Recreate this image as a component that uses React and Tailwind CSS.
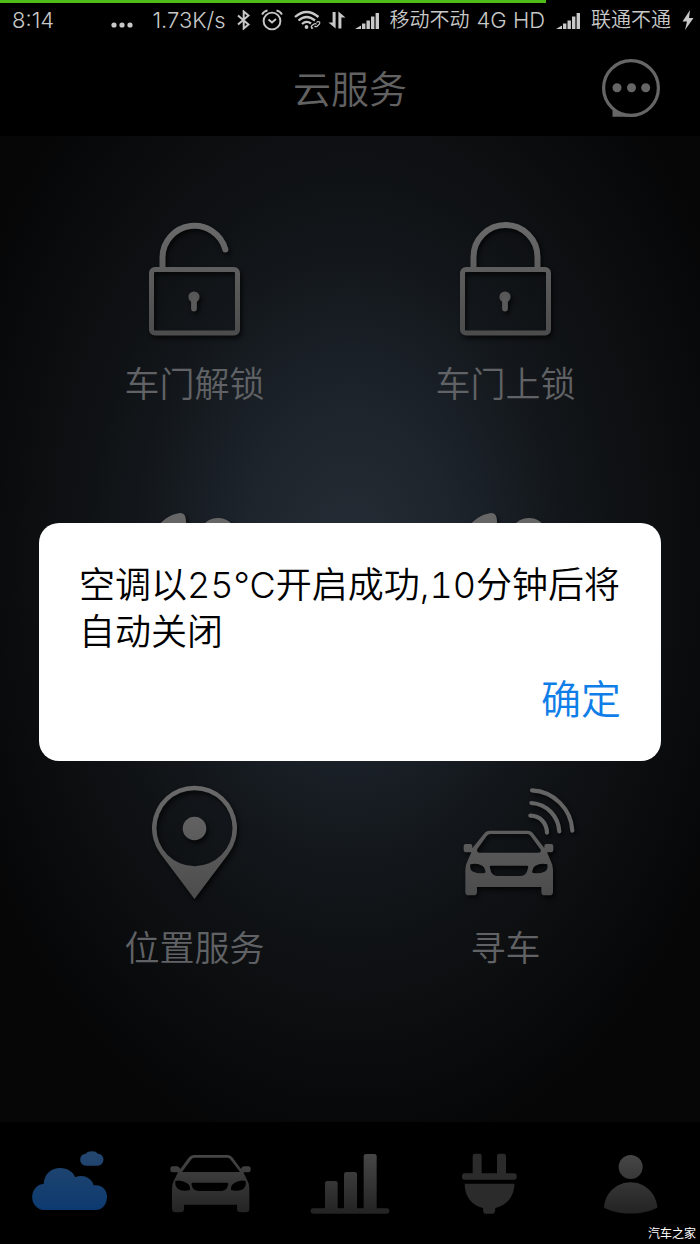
import React from "react";

const metal = "url(#metal)";

// Shared gradients for every icon on the page
function Gradients() {
    return (
        <svg width="0" height="0" className="absolute" aria-hidden="true">
            <defs>
                <linearGradient id="metal" x1="0" y1="0" x2="0" y2="120" gradientUnits="userSpaceOnUse">
                    <stop offset="0" stopColor="#6b6b6c" />
                    <stop offset="1" stopColor="#4b4b4c" />
                </linearGradient>
                <linearGradient id="metalLarge" x1="0" y1="40" x2="0" y2="380" gradientUnits="userSpaceOnUse">
                    <stop offset="0" stopColor="#6b6b6c" />
                    <stop offset="1" stopColor="#4b4b4c" />
                </linearGradient>
                <linearGradient id="tab" x1="0" y1="100" x2="0" y2="280" gradientUnits="userSpaceOnUse">
                    <stop offset="0" stopColor="#474747" />
                    <stop offset="1" stopColor="#232323" />
                </linearGradient>
                <linearGradient id="cloud" x1="0" y1="95" x2="0" y2="270" gradientUnits="userSpaceOnUse">
                    <stop offset="0" stopColor="#25476f" />
                    <stop offset="1" stopColor="#0c3a70" />
                </linearGradient>
            </defs>
        </svg>
    );
}

function ServiceIcon({ children }) {
    return (
        <svg
            viewBox="0 0 120 120"
            className="size-[120px] overflow-visible drop-shadow-[2px_3px_2px_rgba(0,0,0,0.7)]"
            fill="none"
            aria-hidden="true"
        >
            {children}
        </svg>
    );
}

function LockBody() {
    return (
        <>
            <rect x="16.5" y="51.5" width="86" height="63.5" rx="3.5" stroke={metal} strokeWidth="5" />
            <circle cx="59" cy="79" r="5.6" fill={metal} />
            <path d="M59 80v10.5" stroke="#5a5a5b" strokeWidth="5.8" strokeLinecap="round" />
        </>
    );
}

function UnlockIcon() {
    return (
        <ServiceIcon>
            <path d="M27.5 50V39A32 32 0 0 1 90.3 31.2" stroke={metal} strokeWidth="6" />
            <circle cx="90.4" cy="31.4" r="3" fill="#646465" />
            <LockBody />
        </ServiceIcon>
    );
}

function LockIcon() {
    return (
        <ServiceIcon>
            <path d="M27.5 50V39a32 32 0 0 1 64 0V50" stroke={metal} strokeWidth="6" />
            <LockBody />
        </ServiceIcon>
    );
}

function FanIcon() {
    return (
        <ServiceIcon>
            <path
                d="M58 56C42 54 28 46 20 32C24 21 36 14 45 13C50 13 51 17 51 22C54 34 62 44 58 56Z"
                fill={metal}
            />
            <path
                d="M62 58L64 36A19 19 0 0 1 102 38C90 44 72 48 62 58Z"
                fill={metal}
            />
            <path d="M60 64C72 66 98 74 98 92C90 106 74 108 68 106C70 90 66 76 60 64Z" fill={metal} />
            <path d="M56 62C56 78 54 102 36 102C20 100 14 88 16 78C30 76 46 72 56 62Z" fill={metal} />
            <circle cx="59" cy="60" r="7" fill={metal} />
        </ServiceIcon>
    );
}

function PinIcon() {
    return (
        <ServiceIcon>
            <path
                fillRule="evenodd"
                d="M59.5 117L25.5 71.7A42.500 42.500 0 1 1 93.5 71.7ZM59.5 8.200a38 38 0 1 0 0 76a38 38 0 1 0 0-76Z"
                fill={metal}
            />
            <circle cx="59.5" cy="46.5" r="11.8" fill={metal} />
        </ServiceIcon>
    );
}

function FindCarIcon() {
    return (
        <ServiceIcon>
            <g transform="translate(-16 -12) scale(.33333)">
                <path
                    fillRule="evenodd"
                    fill="url(#metalLarge)"
                    d="M180 182H293Q304 182 310 191L343 234V228Q343 222 349 222H363Q370 222 370 229V240Q370 247 363 247H351L362 272Q369 284 369 300V366Q369 376 359 376H344Q334 376 334 366V351H141V366Q141 376 131 376H116Q106 376 106 366V300Q106 284 113 272L124 247H108Q101 247 101 240V229Q101 222 108 222H121Q127 222 127 228V235L162 191Q168 182 180 182ZM181 192Q175 192 170 198L142 237Q139 248 150 248H324Q335 248 332 239L302 198Q298 192 292 192ZM121 283Q118 300 130 305Q146 313 166 308Q168 296 158 288Q140 277 121 283ZM352 283Q355 300 343 305Q327 313 307 308Q305 296 315 288Q333 277 352 283ZM184 287Q177 287 180 294Q184 318 202 318H272Q290 318 294 294Q297 287 290 287Z"
                />
                <g stroke="#646465" strokeWidth="12.5" strokeLinecap="round">
                    <path d="M306 61C372 64 424 118 427 182" />
                    <path d="M304 99C352 102 385 140 388 184" />
                    <path d="M301 137C332 138 350 160 351 188" />
                </g>
            </g>
        </ServiceIcon>
    );
}

function TabIcon({ viewBox, children }) {
    return (
        <svg viewBox={viewBox} className="h-[70px] w-[84px]" fill="url(#tab)" aria-hidden="true">
            {children}
        </svg>
    );
}

function CloudTab() {
    return (
        <TabIcon viewBox="84 84 252 210">
            <g fill="url(#cloud)">
                <path d="M132 270A35 39 0 0 1 131 192C133 160 155 144 181 144C203 144 219 156 226 172C246 162 275 172 281 196C306 192 321 210 321 230C321 254 306 270 286 270Z" />
                <path d="M257 137A17 18 0 0 1 258 101Q263 94 276 94Q288 94 294 101A17 18 0 0 1 293 137Z" />
            </g>
        </TabIcon>
    );
}

function CarTab() {
    return (
        <TabIcon viewBox="504 84 252 210">
            <path
                fillRule="evenodd"
                d="M582 105H683Q692 105 698 113L723 147Q725 139 732 139H745Q752 139 752 145V151Q752 157 745 157H730L741 179Q748 190 748 205V267Q748 277 738 277H722Q711 277 711 267V254H552V267Q552 277 541 277H526Q516 277 516 267V205Q516 190 523 179L534 157H518Q511 157 511 151V145Q511 139 518 139H531Q538 139 541 147L566 113Q572 105 582 105ZM583 113Q577 113 573 119L546 156H720L692 119Q688 113 682 113ZM526 183Q524 203 538 209Q553 215 570 210Q572 196 560 189Q543 178 526 183ZM737 183Q740 203 726 209Q710 215 693 210Q691 196 703 189Q720 178 737 183ZM578 188Q573 188 575 196Q579 213 596 213H664Q680 213 684 196Q687 188 681 188Z"
            />
        </TabIcon>
    );
}

function StatsTab() {
    return (
        <TabIcon viewBox="924 84 252 210">
            <rect x="932" y="265" width="236" height="16" rx="7" />
            <path d="M975 268V190Q975 183 982 183H1006Q1013 183 1013 190V268Z" />
            <path d="M1032 268V163Q1032 156 1039 156H1064Q1071 156 1071 163V268Z" />
            <path d="M1091 268V109Q1091 102 1098 102H1123Q1130 102 1130 109V268Z" />
        </TabIcon>
    );
}

function PlugTab() {
    return (
        <TabIcon viewBox="294 84 252 210">
            <g fill="#2b2b2b">
                <path d="M368 162V108Q368 101 375 101H388Q395 101 395 108V162Z" />
                <path d="M441 162V108Q441 101 448 101H461Q468 101 468 108V162Z" />
                <rect x="336" y="160" width="164" height="19" rx="8" />
                <path d="M344 191H493C493 230 470 256 436 264Q436 281 428 281H405Q399 281 399 264C366 256 344 230 344 191Z" />
            </g>
        </TabIcon>
    );
}

function PersonTab() {
    return (
        <TabIcon viewBox="714 84 252 210">
            <circle cx="842" cy="141" r="36" />
            <path d="M762 263C764 220 800 187 842 187C884 187 919 220 922 263C880 286 804 286 762 263Z" />
        </TabIcon>
    );
}

function Signal() {
    return (
        <svg viewBox="0 0 24 17" className="h-[17px] w-6" fill="currentColor" aria-hidden="true">
            <path d="M0 17L6 13.500V17ZM7 11.500h3.400V17H7ZM11.500 8.500h3.400V17h-3.400ZM16 4.500h3.400V17h-3.400ZM20.600 1H24v16h-3.400Z" />
        </svg>
    );
}

function StatusBar() {
    return (
        <div className="relative flex h-10 items-center justify-between bg-black pl-3 pr-[6px] text-[22px] leading-6 text-[#c8c8c8]">
            {/* Download progress */}
            <div className="absolute left-0 top-0 h-[3px] w-[78%] bg-[#4dbb18]" />
            <span>8:14</span>
            <div className="flex items-center gap-[11px] whitespace-nowrap">
                <svg viewBox="0 0 22 20" className="mr-2 h-5 w-[22px]" fill="currentColor" aria-hidden="true">
                    <circle cx="3" cy="15" r="2.6" />
                    <circle cx="11" cy="15" r="2.6" />
                    <circle cx="19" cy="15" r="2.6" />
                </svg>
                <span>1.73K/s</span>
                <svg viewBox="0 0 13 20" className="h-5 w-[13px]" fill="none" stroke="currentColor" strokeWidth="2" aria-hidden="true">
                    <path d="M1 5.500L11.500 14.500L6.700 18.500V1.500L11.500 5.500L1 14.500" />
                </svg>
                <svg viewBox="0 0 22 22" className="size-[22px]" fill="none" stroke="currentColor" strokeWidth="1.9" aria-hidden="true">
                    <circle cx="11" cy="12" r="8.4" />
                    <path d="M7.500 10.500L11 13.500L15 10M1 5.500Q3 2 6.500 1.500M21 5.500Q19 2 15.500 1.500" />
                </svg>
                <svg viewBox="0 0 27 20" className="h-5 w-[27px]" fill="none" stroke="currentColor" strokeWidth="2.3" aria-hidden="true">
                    <path d="M1 7Q12.500-3 24.500 7M4.500 10.500Q12.500 3.500 21 10.500M8 14Q12.500 10 17 13.500" />
                    <circle cx="12.500" cy="17" r="1.9" fill="currentColor" stroke="none" />
                    <path d="M19 17.500L18 18.500Q16.500 17 18 15.500L20 14Q21.500 13 22.500 14.500M22.500 12.500L24 11.500Q26.500 11.500 25.500 14L23 16.500Q21.500 17 20.500 16" strokeWidth="1.2" />
                </svg>
                <svg viewBox="0 0 18 18" className="-ml-1 -mr-[2px] size-[18px]" fill="currentColor" aria-hidden="true">
                    <path d="M4.600 1h3v16.500L.500 11.500H4.600ZM10.400 17.500V.500L17.500 6.500H13.400V17.500Z" />
                </svg>
                <Signal />
                <span className="text-[20px]">移动不动</span>
                <span className="-ml-1">4G HD</span>
                <Signal />
                <span className="text-[20px]">联通不通</span>
                <svg viewBox="0 0 12 20" className="h-5 w-3" fill="currentColor" aria-hidden="true">
                    <path d="M8 0L.500 11.500H5L3 20L11.500 8H7Z" />
                </svg>
            </div>
        </div>
    );
}

function Header() {
    return (
        <header className="relative flex h-24 items-center justify-center bg-black pt-[2px]">
            <h1 className="text-[38px] leading-[48px] text-[#626262]">云服务</h1>
            <button type="button" aria-label="消息" className="absolute right-10 top-[18px]">
                <svg viewBox="0 0 60 60" className="size-[60px]" fill="none" aria-hidden="true">
                    <circle cx="31" cy="30" r="27.4" stroke="#666" strokeWidth="3.2" />
                    <path d="M12.500 49V58.700H38L31 57Q20 56 12.500 49Z" fill="#666" />
                    <g fill="#666">
                        <circle cx="17" cy="29.7" r="4.5" />
                        <circle cx="31.500" cy="29.7" r="4.5" />
                        <circle cx="45.700" cy="29.7" r="4.5" />
                    </g>
                </svg>
            </button>
        </header>
    );
}

const services = [
    { id: "unlock", label: "车门解锁", icon: <UnlockIcon /> },
    { id: "lock", label: "车门上锁", icon: <LockIcon /> },
    { id: "fan-on", name: "开启空调", icon: <FanIcon /> },
    { id: "fan-off", name: "关闭空调", icon: <FanIcon /> },
    { id: "location", label: "位置服务", icon: <PinIcon /> },
    { id: "find", label: "寻车", icon: <FindCarIcon /> },
];

const tabs = [
    { name: "云服务", icon: <CloudTab /> },
    { name: "车辆", icon: <CarTab /> },
    { name: "统计", icon: <StatsTab /> },
    { name: "充电", icon: <PlugTab /> },
    { name: "我的", icon: <PersonTab /> },
];

export default function App() {
    return (
        <div className="relative flex min-h-screen flex-col bg-black font-['Inter','Noto_Sans_CJK_SC',sans-serif] font-[350]">
            <Gradients />
            <StatusBar />
            <Header />

            <main className="flex-1 bg-[radial-gradient(ellipse_60%_62%_at_50%_43%,#252d36_0%,#1d242c_25%,#12161a_52%,#0d0f11_72%,#08090a_90%,#060607_100%)] px-[39px] pt-[82px]">
                <div className="grid auto-rows-[282px] grid-cols-2">
                    {services.map((item) => (
                        <button
                            key={item.id}
                            type="button"
                            aria-label={item.name}
                            className="flex flex-col items-center gap-6"
                        >
                            {item.icon}
                            {item.label && (
                                <span className="text-[35px] leading-[44px] text-[#606265]">{item.label}</span>
                            )}
                        </button>
                    ))}
                </div>
            </main>

            <nav className="relative grid h-[122px] grid-cols-5 bg-black pt-[26px]">
                {tabs.map((tab) => (
                    <button key={tab.name} type="button" aria-label={tab.name} className="flex items-start justify-center">
                        {tab.icon}
                    </button>
                ))}
                <span className="absolute bottom-[2px] right-1 text-[12px] font-normal leading-4 text-white">汽车之家</span>
            </nav>

            {/* Result dialog */}
            <div className="absolute inset-x-0 bottom-0 top-10 flex items-center justify-center px-[39px]">
                <div role="alertdialog" aria-labelledby="result" className="w-full rounded-[20px] bg-white pb-[37px] pl-10 pr-6 pt-[39px]">
                    <p id="result" className="text-[36px] leading-[47px] tabular-nums text-black">
                        空调以25℃开启成功,10分钟后将自动关闭
                    </p>
                    <div className="mt-5 flex justify-end pr-4">
                        <button type="button" className="text-[40px] leading-[48px] text-[#0f7ee8]">
                            确定
                        </button>
                    </div>
                </div>
            </div>
        </div>
    );
}
